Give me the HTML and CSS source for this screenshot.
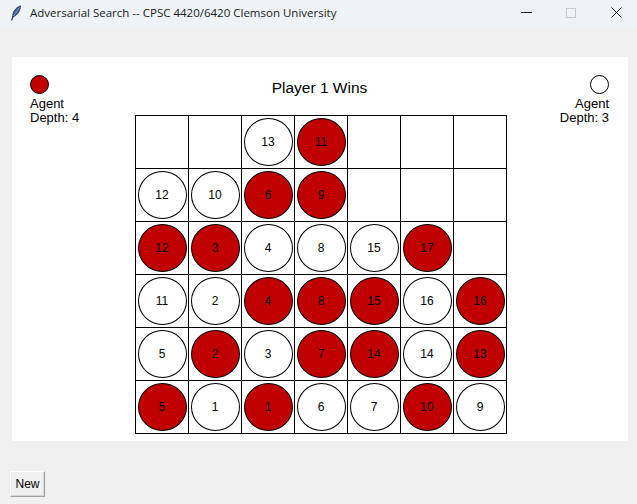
FILE: index.html
```html
<!DOCTYPE html>
<html>
<head>
<meta charset="utf-8">
<title>Adversarial Search</title>
<link rel="stylesheet" href="styles.css">
</head>
<body>
<div class="titlebar">
  <svg class="app-icon" width="12" height="16" viewBox="0 0 12 16">
    <path d="M1.5 15.5 L3.2 11" stroke="#1f2d4a" stroke-width="1.2" fill="none"/>
    <path d="M3 12 C2 8 5 3 10.5 0.8 C10.5 5 8 10 3 12 Z" fill="#3f5f8f" stroke="#1f2d4a" stroke-width="0.8"/>
    <path d="M3.3 11.2 L9.5 2.5" stroke="#9fb6d6" stroke-width="0.7"/>
  </svg>
  <span class="title-text">Adversarial Search -- CPSC 4420/6420 Clemson University</span>
  <div class="controls">
    <span class="ctl-min"></span>
    <span class="ctl-max"></span>
    <svg class="ctl-close" width="11" height="11" viewBox="0 0 11 11">
      <path d="M0.5 0.5 L10.5 10.5 M10.5 0.5 L0.5 10.5" stroke="#1a1a1a" stroke-width="1"/>
    </svg>
  </div>
</div>
<div class="window">
  <div class="canvas">
    <div class="side side-left">
      <div class="token token-red"></div>
      <div class="side-text">Agent<br>Depth: 4</div>
    </div>
    <div class="center">
      <div class="status">Player 1 Wins</div>
      <div class="board">
        <div class="cell"></div>
        <div class="cell"></div>
        <div class="cell"><div class="disc white">13</div></div>
        <div class="cell"><div class="disc red">11</div></div>
        <div class="cell"></div>
        <div class="cell"></div>
        <div class="cell"></div>

        <div class="cell"><div class="disc white">12</div></div>
        <div class="cell"><div class="disc white">10</div></div>
        <div class="cell"><div class="disc red">6</div></div>
        <div class="cell"><div class="disc red">9</div></div>
        <div class="cell"></div>
        <div class="cell"></div>
        <div class="cell"></div>

        <div class="cell"><div class="disc red">12</div></div>
        <div class="cell"><div class="disc red">3</div></div>
        <div class="cell"><div class="disc white">4</div></div>
        <div class="cell"><div class="disc white">8</div></div>
        <div class="cell"><div class="disc white">15</div></div>
        <div class="cell"><div class="disc red">17</div></div>
        <div class="cell"></div>

        <div class="cell"><div class="disc white">11</div></div>
        <div class="cell"><div class="disc white">2</div></div>
        <div class="cell"><div class="disc red">4</div></div>
        <div class="cell"><div class="disc red">8</div></div>
        <div class="cell"><div class="disc red">15</div></div>
        <div class="cell"><div class="disc white">16</div></div>
        <div class="cell"><div class="disc red">16</div></div>

        <div class="cell"><div class="disc white">5</div></div>
        <div class="cell"><div class="disc red">2</div></div>
        <div class="cell"><div class="disc white">3</div></div>
        <div class="cell"><div class="disc red">7</div></div>
        <div class="cell"><div class="disc red">14</div></div>
        <div class="cell"><div class="disc white">14</div></div>
        <div class="cell"><div class="disc red">13</div></div>

        <div class="cell"><div class="disc red">5</div></div>
        <div class="cell"><div class="disc white">1</div></div>
        <div class="cell"><div class="disc red">1</div></div>
        <div class="cell"><div class="disc white">6</div></div>
        <div class="cell"><div class="disc white">7</div></div>
        <div class="cell"><div class="disc red">10</div></div>
        <div class="cell"><div class="disc white">9</div></div>
      </div>
    </div>
    <div class="side side-right">
      <div class="token token-white"></div>
      <div class="side-text">Agent<br>Depth: 3</div>
    </div>
  </div>
  <button class="new-btn">New</button>
</div>
</body>
</html>
```

FILE: styles.css
```css
html, body {
  margin: 0;
  padding: 0;
}
body {
  width: 637px;
  height: 504px;
  overflow: hidden;
  background: #f0f0f0;
  font-family: "Liberation Sans", Arial, sans-serif;
  color: #000;
}
.titlebar {
  height: 27px;
  background: #eff3f8;
  display: flex;
  align-items: center;
}
.app-icon {
  margin-left: 10px;
  margin-top: -2px;
  flex: none;
}
.title-text {
  margin-left: 8px;
  font-family: "Open Sans", "Noto Sans", sans-serif;
  font-size: 11.5px;
  color: #1a1a1a;
  margin-top: -2px;
}
.controls {
  margin-left: auto;
  display: flex;
  align-items: center;
  padding-right: 15px;
  margin-top: -2px;
}
.ctl-min {
  width: 11px;
  height: 1px;
  background: #1a1a1a;
  margin-right: 34px;
}
.ctl-max {
  width: 10px;
  height: 10px;
  box-sizing: border-box;
  border: 1px solid #c8c8c8;
  margin-right: 35px;
}
.ctl-close {
  display: block;
}
.window {
  padding: 30px 0 0 12px;
}
.canvas {
  width: 616px;
  height: 384px;
  background: #fff;
  display: grid;
  grid-template-columns: 123px 372px 1fr;
}
.side {
  font-size: 13px;
  line-height: 14px;
  padding-top: 18px;
}
.side-left {
  padding-left: 18px;
}
.side-right {
  padding-right: 19px;
  text-align: right;
}
.token {
  width: 19px;
  height: 19px;
  box-sizing: border-box;
  border: 1px solid #000;
  border-radius: 50%;
  margin-bottom: 3px;
}
.side-right .token {
  margin-left: auto;
}
.token-red {
  background: #c00000;
}
.token-white {
  background: #fff;
}
.center {
  padding-top: 22px;
}
.status {
  font-size: 15.5px;
  line-height: 18px;
  text-align: center;
  margin-bottom: 18px;
  margin-left: -3px;
}
.board {
  display: grid;
  grid-template-columns: repeat(7, 53px);
  grid-auto-rows: 53px;
  border-left: 1px solid #000;
  border-top: 1px solid #000;
  width: 371px;
}
.cell {
  box-sizing: border-box;
  border-right: 1px solid #000;
  border-bottom: 1px solid #000;
  display: flex;
  align-items: center;
  justify-content: center;
}
.disc {
  width: 49px;
  height: 48px;
  box-sizing: border-box;
  border: 1px solid #000;
  border-radius: 50%;
  display: flex;
  align-items: center;
  justify-content: center;
  font-size: 12px;
}
.disc.red {
  background: #c00000;
}
.disc.white {
  background: #fff;
}
.new-btn {
  display: block;
  margin: 30px 0 0 -2px;
  width: 35px;
  height: 26px;
  padding: 0;
  background: #f0f0f0;
  font-family: "Liberation Sans", Arial, sans-serif;
  font-size: 12px;
  color: #000;
  border: 1px solid;
  border-color: #ffffff #a0a0a0 #a0a0a0 #ffffff;
  box-shadow: inset -1px -1px 0 #d8d8d8;
  border-radius: 0;
}
```
